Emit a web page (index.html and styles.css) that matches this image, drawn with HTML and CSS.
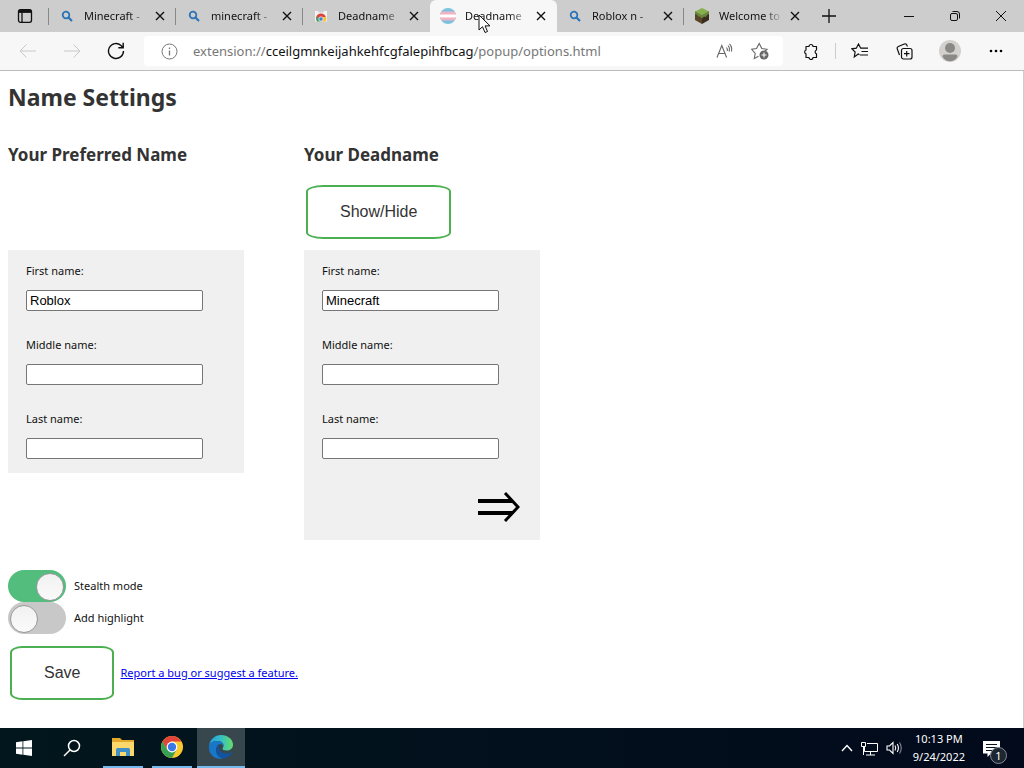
FILE: index.html
```
<!DOCTYPE html>
<html lang="en">
  <head>
    <meta charset="UTF-8" />
    <meta name="viewport" content="width=device-width, initial-scale=1.0" />
    <title>Deadname Remover - Options</title>
    <link rel="stylesheet" href="styles.css">
  </head>
  <body>
    <svg class="svg-defs" aria-hidden="true">
      <symbol id="icon-search" viewBox="0 0 12 12" fill="none" stroke="currentColor">
        <circle cx="5" cy="5" r="3.3" stroke-width="1.8"></circle>
        <path d="M7.5 7.5L11 11" stroke-width="2.2"></path>
      </symbol>
      <symbol id="icon-close" viewBox="0 0 10 10" fill="none" stroke="currentColor" stroke-width="1.4">
        <path d="M1 1l8 8M9 1l-8 8"></path>
      </symbol>
    </svg>

    <!-- Tab strip -->
    <header class="tab-strip">
      <button class="tab-actions" aria-label="Tab actions">
        <svg width="16" height="16" viewBox="0 0 16 16" fill="none" stroke="currentColor" stroke-width="1.3">
          <rect x="1.5" y="1.7" width="13" height="12.6" rx="2"></rect>
          <path d="M2 3.4h12" stroke-width="3"></path>
          <path d="M5 4v10"></path>
        </svg>
      </button>
      <nav class="tabs">
        <div class="tab">
          <svg class="favicon search" width="12" height="12"><use href="#icon-search"></use></svg>
          <button class="tab-title">Minecraft -</button>
          <button class="tab-close" aria-label="Close tab"><svg width="10" height="10"><use href="#icon-close"></use></svg></button>
        </div>
        <div class="tab">
          <svg class="favicon search" width="12" height="12"><use href="#icon-search"></use></svg>
          <button class="tab-title">minecraft -</button>
          <button class="tab-close" aria-label="Close tab"><svg width="10" height="10"><use href="#icon-close"></use></svg></button>
        </div>
        <div class="tab">
          <svg class="favicon" width="12" height="12" viewBox="0 0 12 12">
            <path d="M0 1h12v10.500H0z" fill="#f1f1f1"></path>
            <path d="M3.500 1.800h5" stroke="#bbb"></path>
            <path d="M1 9a5 5 0 0 1 10-1H6z" fill="#dc4437"></path>
            <path d="M1 9l1.500-3L6 11.500H2A5 5 0 0 1 1 9z" fill="#4a9d5b"></path>
            <path d="M6 11.500L8 7h3.200a5 5 0 0 1-.8 4.500z" fill="#f4c430"></path>
            <circle cx="6" cy="9" r="2.200" fill="#4a7fd6" stroke="#fff" stroke-width=".7"></circle>
          </svg>
          <button class="tab-title">Deadname</button>
          <button class="tab-close" aria-label="Close tab"><svg width="10" height="10"><use href="#icon-close"></use></svg></button>
        </div>
        <div class="tab active">
          <svg class="favicon flag" width="16" height="16" viewBox="0 0 16 16">
            <clipPath id="flag-clip"><circle cx="8" cy="8" r="8"></circle></clipPath>
            <g clip-path="url(#flag-clip)">
              <path d="M0 0h16v16H0z" fill="#79c3dc"></path>
              <path d="M0 3.500h16v9H0z" fill="#efb3c4"></path>
              <path d="M0 6.500h16v3H0z" fill="#fff"></path>
            </g>
          </svg>
          <button class="tab-title">Deadname</button>
          <button class="tab-close" aria-label="Close tab"><svg width="10" height="10"><use href="#icon-close"></use></svg></button>
          <svg class="cursor" width="13" height="20" viewBox="0 0 13 20">
            <path d="M1 1v15l3.500-3.300L7 18.500l2.500-1-2.400-5.600H12z" fill="#fff" stroke="#111"></path>
          </svg>
        </div>
        <div class="tab">
          <svg class="favicon search" width="12" height="12"><use href="#icon-search"></use></svg>
          <button class="tab-title">Roblox n -</button>
          <button class="tab-close" aria-label="Close tab"><svg width="10" height="10"><use href="#icon-close"></use></svg></button>
        </div>
        <div class="tab">
          <svg class="favicon block" width="16" height="16" viewBox="0 0 16 16">
            <path d="M8 0l7 3.500L8 7.500 1 3.500z" fill="#85b04c"></path>
            <path d="M1 3.500l7 4V16l-7-4z" fill="#594427"></path>
            <path d="M15 3.500l-7 4V16l7-4z" fill="#3b2d1b"></path>
            <path d="M1 3.500l7 4 7-4v2.500l-2 1-1 2-2-.500-2 2-2-2-2 0-1-2-2-.500z" fill="#67893c"></path>
          </svg>
          <button class="tab-title">Welcome to</button>
          <button class="tab-close" aria-label="Close tab"><svg width="10" height="10"><use href="#icon-close"></use></svg></button>
        </div>
      </nav>
      <button class="new-tab" aria-label="New tab">
        <svg width="14" height="14" viewBox="0 0 14 14" stroke="currentColor" stroke-width="1.3"><path d="M7 0v14M0 7h14"></path></svg>
      </button>
      <div class="window-controls">
        <button aria-label="Minimize">
          <svg width="12" height="12" viewBox="0 0 12 12" stroke="currentColor"><path d="M1 6.500h10"></path></svg>
        </button>
        <button aria-label="Restore">
          <svg width="12" height="12" viewBox="0 0 12 12" fill="none" stroke="currentColor">
            <rect x="1.500" y="3.500" width="7" height="7" rx="1.500"></rect>
            <path d="M3.500 1.500H8a2.500 2.500 0 0 1 2.500 2.500v4.500"></path>
          </svg>
        </button>
        <button aria-label="Close">
          <svg width="12" height="12" viewBox="0 0 12 12" stroke="currentColor"><path d="M1 1l10 10M11 1L1 11"></path></svg>
        </button>
      </div>
    </header>

    <!-- Toolbar -->
    <div class="toolbar">
      <div class="nav-buttons">
        <button disabled aria-label="Back">
          <svg width="18" height="14" viewBox="0 0 18 14" fill="none" stroke="currentColor"><path d="M17 7H1M7.500.5L1 7l6.500 6.500"></path></svg>
        </button>
        <button disabled aria-label="Forward">
          <svg width="18" height="14" viewBox="0 0 18 14" fill="none" stroke="currentColor"><path d="M1 7h16M10.500.5L17 7l-6.500 6.500"></path></svg>
        </button>
        <button aria-label="Refresh">
          <svg width="18" height="18" viewBox="0 0 18 18" fill="none" stroke="currentColor" stroke-width="1.4"><path d="M16.500 9A7.500 7.500 0 1 1 14 3.400L16 5.500M16.200.8v4.900h-4.900"></path></svg>
        </button>
      </div>
      <div class="address-bar">
        <svg width="17" height="17" viewBox="0 0 17 17" fill="none" stroke="#777">
          <circle cx="8.500" cy="8.500" r="7.500"></circle>
          <path d="M8.500 7.500v5M8.500 4.500v1.500" stroke-width="1.300"></path>
        </svg>
        <div class="url" role="textbox" aria-label="Address" contenteditable="true">extension://<span class="host">cceilgmnkeijahkehfcgfalepihfbcag</span>/popup/options.html</div>
        <button aria-label="Read aloud">
          <svg width="17" height="16" viewBox="0 0 17 16" fill="none" stroke="currentColor" stroke-width="1.1">
            <path d="M1 14.500L5.800 2.500l4.800 12M2.700 10.500h6.200M10.500 4.500q1.300 1.500.7 3.500M12 2.500q2.300 2.500 1 6M13.500.800q3.200 3 1.800 7.700"></path>
          </svg>
        </button>
        <button aria-label="Add to favorites">
          <svg width="18" height="18" viewBox="0 0 18 18" fill="none" stroke="currentColor" stroke-width="1.1">
            <path d="M7.500 14.300l-4.200 2.200.9-5L.700 7.300l4.800-.8L8.200 1.500l2.600 5 5.200.8-2.500 2.200"></path>
            <circle cx="13" cy="13" r="4.500" fill="#666" stroke="none"></circle>
            <path d="M13 10.500v5M10.500 13h5" stroke="#fff"></path>
          </svg>
        </button>
      </div>
      <div class="tools">
        <button class="extensions" aria-label="Extensions">
          <svg width="16" height="17" viewBox="0 0 16 17" fill="none" stroke="currentColor" stroke-width="1.200">
            <path d="M3 3.500h3a2 2 0 0 1 4 0h3.500V7a2 2 0 0 0 0 3.800v3.700H10a2 2 0 0 1-4 0H3v-3.700a2 2 0 0 1 0-3.800z" stroke-linejoin="round"></path>
          </svg>
        </button>
        <button class="favorites" aria-label="Favorites">
          <svg width="18" height="16" viewBox="0 0 18 16" fill="none" stroke="currentColor" stroke-width="1.200">
            <path d="M8.500 11.700L7.300 11l-4 3 .8-5L.800 5.800l4.500-.6L7.500 1l2.200 4.200H17M10.500 8.500H17M9 12h8"></path>
          </svg>
        </button>
        <button aria-label="Collections">
          <svg width="17" height="17" viewBox="0 0 17 17" fill="none" stroke="currentColor" stroke-width="1.200">
            <rect x="5.500" y="5.500" width="10.500" height="10.500" rx="2"></rect>
            <path d="M10.700 8v5.500M8 10.700h5.500M3.500 12L1.300 6a2 2 0 0 1 1-2.500l6-2.500a2 2 0 0 1 2.600 1.200l.6 1.300"></path>
          </svg>
        </button>
        <button class="profile" aria-label="Profile">
          <svg width="22" height="22" viewBox="0 0 22 22">
            <circle cx="11" cy="11" r="11" fill="#d3d1ce"></circle>
            <circle cx="11" cy="8" r="5" fill="#8b8986"></circle>
            <path d="M3.500 16.500q0-2 2-2h11q2 0 2 2-2.500 4.800-7.500 4.800t-7.500-4.800z" fill="#8b8986"></path>
          </svg>
        </button>
        <button aria-label="Settings and more">
          <svg width="16" height="4" viewBox="0 0 16 4"><circle cx="3" cy="2" r="1.300"></circle><circle cx="8" cy="2" r="1.300"></circle><circle cx="13" cy="2" r="1.300"></circle></svg>
        </button>
      </div>
    </div>

    <!-- Options page -->
    <main class="page">
      <h1>Name Settings</h1>
      <div class="names">
        <section class="name-column">
          <h2>Your Preferred Name</h2>
          <div class="reveal"></div>
          <div class="name-card">
            <div class="field">
              <label for="pref-first">First name:</label>
              <input type="text" id="pref-first" value="Roblox">
            </div>
            <div class="field">
              <label for="pref-middle">Middle name:</label>
              <input type="text" id="pref-middle">
            </div>
            <div class="field">
              <label for="pref-last">Last name:</label>
              <input type="text" id="pref-last">
            </div>
          </div>
        </section>
        <section class="name-column">
          <h2>Your Deadname</h2>
          <div class="reveal"><button class="btn">Show/Hide</button></div>
          <div class="name-card">
            <div class="field">
              <label for="dead-first">First name:</label>
              <input type="text" id="dead-first" value="Minecraft">
            </div>
            <div class="field">
              <label for="dead-middle">Middle name:</label>
              <input type="text" id="dead-middle">
            </div>
            <div class="field">
              <label for="dead-last">Last name:</label>
              <input type="text" id="dead-last">
            </div>
            <button class="next" aria-label="Next name">
              <svg width="43" height="30" viewBox="0 0 43 30" fill="none" stroke="#000">
                <path d="M1 9h34M1 21h34" stroke-width="4"></path>
                <path d="M28 1l13 14-13 14" stroke-width="3"></path>
              </svg>
            </button>
          </div>
        </section>
      </div>
      <div class="toggles">
        <label class="toggle"><input type="checkbox" checked> Stealth mode</label>
        <label class="toggle"><input type="checkbox"> Add highlight</label>
      </div>
      <div class="actions">
        <button class="btn">Save</button>
        <a href="#report">Report a bug or suggest a feature.</a>
      </div>
    </main>

    <!-- Windows taskbar -->
    <footer class="taskbar">
      <button class="task" aria-label="Start">
        <svg width="16" height="16" viewBox="0 0 16 16" fill="#fff"><path d="M0 2.200l6.500-.9v6.200H0zM7.300 1.200L16 0v7.500H7.300zM0 8.400h6.500v6.300L0 13.800zM7.300 8.400H16V16l-8.700-1.200z"></path></svg>
      </button>
      <button class="task" aria-label="Search">
        <svg width="18" height="18" viewBox="0 0 18 18" fill="none" stroke="#fff" stroke-width="1.500"><circle cx="11" cy="7" r="5.500"></circle><path d="M7 11l-6 6"></path></svg>
      </button>
      <button class="task open" aria-label="File Explorer">
        <svg width="22" height="18" viewBox="0 0 22 18">
          <path d="M0 0h8l2 2h12v16H0z" fill="#e3a92c"></path>
          <path d="M0 4h22v14H0z" fill="#fbd86b"></path>
          <path d="M4 18v-6.500q0-1.500 1.500-1.500h11q1.500 0 1.500 1.500V18h-4v-4H8v4z" fill="#3f90c8"></path>
        </svg>
      </button>
      <button class="task open" aria-label="Chrome">
        <svg width="22" height="22" viewBox="0 0 22 22">
          <circle cx="11" cy="11" r="11" fill="#f9c92e"></circle>
          <path d="M1.500 5.500A11 11 0 0 1 20.500 5.500H11L6.200 13.700z" fill="#e0453a"></path>
          <path d="M1.500 5.500L6.300 13.800 11 16.500l4.500-2.800L11 22A11 11 0 0 1 1.500 5.500z" fill="#37a153"></path>
          <circle cx="11" cy="11" r="5.400" fill="#fff"></circle>
          <circle cx="11" cy="11" r="4.200" fill="#3b78e7"></circle>
        </svg>
      </button>
      <button class="task open current" aria-label="Edge">
        <svg width="26" height="24" viewBox="0 0 26 24">
          <defs>
            <linearGradient id="edge-top"><stop offset="0" stop-color="#249be0"></stop><stop offset=".5" stop-color="#35bfc4"></stop><stop offset="1" stop-color="#66dd68"></stop></linearGradient>
          </defs>
          <path d="M1 11C2 4 7 0 13 0c7 0 12 4.500 12 9.500 0 4-3 6-6.500 6-3 0-4-1-4-2 0-.7 1-1 1-3C15.500 8 13 6 9.500 6 5 6 2 8 1 11z" fill="url(#edge-top)"></path>
          <path d="M1 11C2 7.500 5 6 9 6c3.500 0 6.500 2 6.500 4.500-1-1-2-1.500-3-1.500-2.500 0-4.500 3-4.500 6 0 4 3.500 7.500 7 8.500C7 25.500 0 19 1 11z" fill="#1877c9"></path>
          <path d="M12 9.500c-2.500 1-4 3-4 6 0 4.500 4 8.300 8 8 3.500-.5 6.500-3 8-5.500.4-.8-.2-1-1-.6-5.500 2.500-12 0-12-4.700 0-1.300.3-2.300 1-3.200z" fill="#12539f"></path>
        </svg>
      </button>
      <div class="tray">
        <svg width="12" height="8" viewBox="0 0 12 8" fill="none" stroke="#fff" stroke-width="1.400"><path d="M1 7l5-5.500L11 7"></path></svg>
        <svg width="17" height="15" viewBox="0 0 17 15" fill="none" stroke="#fff">
          <path d="M6 2.500h10.500v8H3.500V6M9.500 10.500v3.500M5 14h9M.5 1.500h4v4h-4zM2.500 5.500v8.500"></path>
        </svg>
        <svg width="17" height="14" viewBox="0 0 17 14" fill="none" stroke="#fff" stroke-width="1.100">
          <path d="M1 5v4h2.500L7 12.500v-11L3.500 5zM9 4.500q1.500 2.500 0 5M11.200 3q2.500 4 0 8"></path>
          <path d="M13.500 1.500q3.500 5.500 0 11" stroke="#889"></path>
        </svg>
      </div>
      <div class="clock"><time>10:13 PM</time><time>9/24/2022</time></div>
      <button class="notifications" aria-label="1 new notification">
        <svg width="17" height="17" viewBox="0 0 17 17"><path d="M0 1h17v12.500H8L4.500 17v-3.500H0z" fill="#fff"></path><path d="M3 4.500h11M3 7.500h11M3 10.500h7" stroke="#0a1420"></path></svg>
        <span class="badge">1</span>
      </button>
    </footer>
  </body>
</html>
```
FILE: styles.css
```
:root {
  --ui-font: "Noto Sans", "Open Sans", sans-serif;
  --green: #4caf50;
  --text: #111;
}

* {
  box-sizing: border-box;
}

body {
  margin: 0;
  min-height: 100vh;
  display: flex;
  flex-direction: column;
  font-family: var(--ui-font);
  font-size: 11px;
  line-height: 18px;
  color: var(--text);
  background: #fff;
}

button {
  margin: 0;
  padding: 0;
  border: 0;
  background: none;
  color: inherit;
  font: inherit;
}

svg {
  display: block;
  flex: none;
}

.svg-defs {
  position: absolute;
  width: 0;
  height: 0;
}

/* Tab strip */
.tab-strip {
  display: flex;
  height: 32px;
  background: #cdcdcd;
}

.tab-actions {
  display: grid;
  place-items: center;
  width: 49px;
}

.tabs {
  display: flex;
}

.tab {
  position: relative;
  display: flex;
  align-items: center;
  width: 127px;
  padding: 0 10px 0 12px;
}

.tab::before {
  content: "";
  position: absolute;
  left: -1px;
  top: 8px;
  width: 1px;
  height: 17px;
  background: #888;
}

.tab.active {
  background: #f7f7f7;
  border-radius: 6px 6px 0 0;
}

.tab.active::before,
.tab.active + .tab::before {
  display: none;
}

.favicon {
  margin: 0 11px 0 0;
}

.favicon.search {
  color: #2b74b8;
}

.favicon.flag,
.favicon.block {
  margin: 0 9px 0 -2px;
}

.tab-title {
  flex: 1;
  min-width: 0;
  overflow: hidden;
  white-space: nowrap;
  text-align: left;
  -webkit-mask-image: linear-gradient(90deg, #000 70%, transparent);
  mask-image: linear-gradient(90deg, #000 70%, transparent);
}

.tab-close {
  display: grid;
  place-items: center;
  width: 12px;
  height: 20px;
  margin-left: 6px;
}

.cursor {
  position: absolute;
  left: 48px;
  top: 14px;
}

.new-tab {
  width: 36px;
  display: grid;
  place-items: center;
}

.window-controls {
  display: flex;
  margin-left: auto;
}

.window-controls button {
  width: 46px;
  display: grid;
  place-items: center;
}

/* Toolbar */
.toolbar {
  display: flex;
  align-items: center;
  height: 39px;
  background: #f7f7f7;
  border-bottom: 1px solid #bcbcbc;
}

.nav-buttons {
  display: flex;
  padding-left: 6px;
}

.nav-buttons button {
  display: grid;
  place-items: center;
  width: 44px;
  height: 32px;
}

.nav-buttons button:disabled {
  color: #c8c8c8;
}

.address-bar {
  flex: 1;
  display: flex;
  align-items: center;
  height: 30px;
  margin-left: 6px;
  padding: 0 14px 0 17px;
  background: #fff;
  border-radius: 4px;
  color: #666;
}

.url {
  flex: 1;
  margin-left: 15px;
  font-size: 13px;
  white-space: nowrap;
  color: #777;
}

.host {
  color: #111;
}

.address-bar button {
  margin-left: 18px;
}

.tools {
  display: flex;
  align-items: center;
  padding: 0 6px 0 5px;
}

.tools button {
  display: grid;
  place-items: center;
  width: 44px;
  height: 32px;
}

.tools .extensions {
  width: 46px;
  margin-right: 4px;
}

.tools .profile {
  width: 48px;
}

.favorites {
  position: relative;
}

.favorites::before {
  content: "";
  position: absolute;
  left: -3px;
  top: 8px;
  width: 1px;
  height: 16px;
  background: #ccc;
}

/* Options page */
.page {
  flex: 1;
  padding: 8px 8px 28px;
  border-right: 1px solid #ccc;
}

h1,
h2 {
  margin: 0;
  color: #333;
}

h1 {
  font-size: 23px;
  line-height: 36px;
}

h2 {
  font-size: 17px;
  line-height: 24px;
}

.names {
  display: flex;
  align-items: flex-start;
  gap: 60px;
  margin-top: 28px;
}

.name-column {
  width: 236px;
}

.reveal {
  height: 83px;
  padding: 18px 2px 0;
}

.btn {
  height: 54px;
  padding: 0 32px;
  border: 2px solid var(--green);
  border-radius: 12%;
  background: #fff;
  font-family: "Liberation Sans", Arial, sans-serif;
  font-size: 16px;
  color: #333;
}

.name-card {
  display: flex;
  flex-direction: column;
  gap: 25px;
  padding: 12px 18px 14px;
  background: #f0f0f0;
}

.field {
  display: flex;
  flex-direction: column;
  align-items: flex-start;
  gap: 10px;
}

.field input {
  width: 177px;
  height: 21px;
  padding: 1px 3px;
  border: 1px solid #767676;
  border-radius: 2px;
  background: #fff;
  font-family: "Liberation Sans", Arial, sans-serif;
  font-size: 13px;
  color: #000;
}

.next {
  align-self: flex-end;
  margin: 8px 2px 4px 0;
}

.toggles {
  margin-top: 30px;
}

.toggle {
  display: flex;
  align-items: center;
  gap: 8px;
  width: fit-content;
}

.toggle input {
  appearance: none;
  display: flex;
  width: 58px;
  height: 32px;
  margin: 0;
  padding: 3px 2px;
  border-radius: 16px;
  background: #c8c8c8;
}

.toggle input::before {
  content: "";
  width: 26px;
  height: 26px;
  border: 1px solid #999;
  border-radius: 50%;
  background: linear-gradient(#f1f1f1, #fafafa);
}

.toggle input:checked {
  justify-content: flex-end;
  background: #52bd7c;
}

.actions {
  display: flex;
  align-items: center;
  gap: 6px;
  margin-top: 12px;
  padding-left: 2px;
}

.actions a {
  color: #0000ee;
}

/* Taskbar */
.taskbar {
  display: flex;
  height: 40px;
  color: #fff;
  background: linear-gradient(90deg, #02161d, #020a1c);
}

.task {
  display: grid;
  place-items: center;
  width: 48px;
}

.task.open {
  width: 40px;
  margin: 0 5px 0 4px;
  border-bottom: 2px solid #76b9ed;
}

.task.open.current {
  width: 48px;
  margin: 0;
  background: #37474d;
}

.task.open:nth-child(3) {
  margin-left: 7px;
}

.tray {
  display: flex;
  align-items: center;
  gap: 8px;
  margin-left: auto;
}

.clock {
  display: flex;
  flex-direction: column;
  align-items: center;
  padding: 2px 0;
  margin-left: 10px;
}

.notifications {
  position: relative;
  display: flex;
  align-items: center;
  width: 38px;
  margin-left: 18px;
  margin-right: 3px;
}

.badge {
  position: absolute;
  left: 7px;
  top: 19px;
  width: 17px;
  height: 17px;
  border: 1px solid #889;
  border-radius: 50%;
  background: #1c2730;
  line-height: 15px;
  text-align: center;
}
```
